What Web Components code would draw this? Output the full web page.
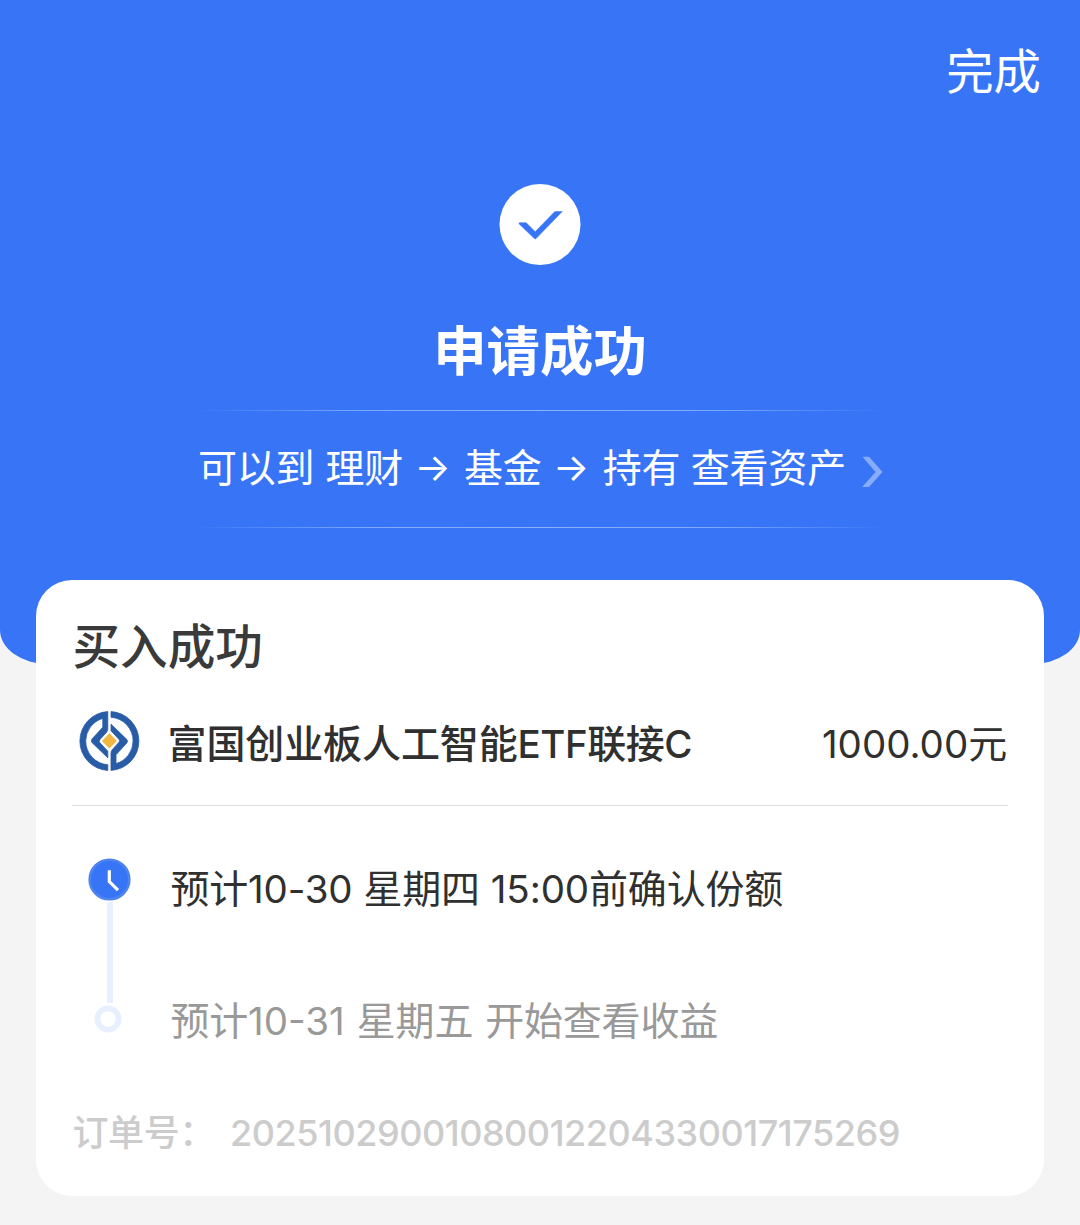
<!DOCTYPE html>
<html lang="zh-CN">
<head>
<meta charset="utf-8">
<title>申请成功</title>
<style>
    body {
        margin: 0;
        background: #f4f4f4;
        font-family: Inter, "Noto Sans CJK SC", sans-serif;
    }
</style>
</head>
<body>
<result-page>
    <result-header slot="header" action="完成" heading="申请成功">
        <text-run>可以到</text-run>
        <text-run style="--gap: 11px">理财</text-run>
        <text-run arrow style="--gap: 12px">→</text-run>
        <text-run style="--gap: 12px">基金</text-run>
        <text-run arrow style="--gap: 12px">→</text-run>
        <text-run style="--gap: 12px">持有</text-run>
        <text-run style="--gap: 10.5px">查看资产</text-run>
    </result-header>
    <order-card heading="买入成功">
        <fund-row slot="fund">
            <text-run style="--space: -0.1px">富国创业板人工智能</text-run><text-run latin style="--space: -0.5px">ETF</text-run><text-run style="--space: -0.5px">联接</text-run><text-run latin style="--space: -0.5px">C</text-run>
            <text-run slot="amount" latin style="--space: 0">1000.00</text-run><text-run slot="amount">元</text-run>
        </fund-row>
        <time-step active>
            <text-run>预计</text-run><text-run latin style="--space: -0.2px">10-30</text-run>
            <text-run style="--gap: 11px">星期四</text-run>
            <text-run latin style="--gap: 11px; --space: -0.1px">15:00</text-run><text-run>前确认份额</text-run>
        </time-step>
        <time-step>
            <text-run>预计</text-run><text-run latin style="--space: 0">10-31</text-run>
            <text-run style="--gap: 12px">星期五</text-run>
            <text-run style="--gap: 12px">开始查看收益</text-run>
        </time-step>
        <order-number slot="footer" label="订单号：">20251029001080012204330017175269</order-number>
    </order-card>
</result-page>

<script>
(function() {
    /**
     * Build a template from a string of markup, so that each
     * element clones it instead of parsing it again.
     */
    function createTemplate(html) {
        const template = document.createElement('template');
        template.innerHTML = html;
        return template;
    }

    class BaseElement extends HTMLElement {
        constructor() {
            super();
            this.attachShadow({mode: 'open'});
            this.shadowRoot.appendChild(this.constructor.template.content.cloneNode(true));
        }

        connectedCallback() {
            // copy plain text attributes into the nodes that show them
            this.shadowRoot.querySelectorAll('[data-text]').forEach((node) => {
                node.textContent = this.getAttribute(node.dataset.text) || '';
            });
        }
    }

    class ResultPage extends BaseElement {
        static template = createTemplate(`
        <style>
            :host {
                display: block;
                min-height: 1225px;
            }
            main {
                margin: -85px 36px 0;
            }
        </style>
        <slot name="header"></slot>
        <main><slot></slot></main>
        `);
    }

    class TextRun extends BaseElement {
        static template = createTemplate(`
        <style>
            :host {
                display: block;
                flex: none;
                white-space: nowrap;
                margin-left: var(--gap, 0);
                font-size: 39px;
                line-height: 56px;
                letter-spacing: var(--space, -0.2px);
            }
            :host([latin]) {
                font-size: 38.5px;
            }
            :host([arrow]) {
                display: flex;
                justify-content: center;
                box-sizing: border-box;
                width: 37px;
                padding-right: 2px;
                margin-top: -2px;
                font-size: 38px;
            }
        </style>
        <slot></slot>
        `);
    }

    class ResultHeader extends BaseElement {
        static template = createTemplate(`
        <style>
            :host {
                display: flex;
                flex-direction: column;
                align-items: center;
                box-sizing: border-box;
                height: 664px;
                background: #3875f6;
                color: #fff;
                border-radius: 0 0 48px 48px / 0 0 34px 34px;
                margin-bottom: 1px;
            }
            .action {
                align-self: flex-end;
                margin: 42px 39px 0 0;
                font-size: 47.4px;
                line-height: 60px;
            }
            svg {
                display: block;
                flex: none;
            }
            .badge {
                margin-top: 82px;
            }
            h1 {
                margin: 51px 0 0;
                font-size: 53.4px;
                line-height: 70px;
                font-weight: 700;
            }
            .hint {
                position: relative;
                display: flex;
                align-items: center;
                box-sizing: border-box;
                width: 684px;
                height: 118px;
                margin-top: 23px;
                padding-bottom: 3px;
            }
            .hint::before, .hint::after {
                content: "";
                position: absolute;
                left: 0;
                right: 0;
                height: 1px;
                background: linear-gradient(90deg, transparent, #7eaafa 25%, #8ab2fb 50%, #7eaafa 75%, transparent);
            }
            .hint::before { top: 0; }
            .hint::after { bottom: 0; }
            .chevron {
                margin: 9px 0 0 16px;
            }
        </style>
        <div class="action" data-text="action"></div>
        <svg class="badge" width="82" height="82" viewBox="0 0 82 82">
            <circle cx="41" cy="40.5" r="40.5" fill="#fff"/>
            <path d="M20.2 38.8H27.2L36.2 47.8 55.2 28.2Q55.8 27.6 56.8 27.6H63.2L37 54.6Q36.2 55.3 35.4 54.6L20 39.8Z" fill="#3875f6" stroke="#3875f6" stroke-width=".6"/>
        </svg>
        <h1 data-text="heading"></h1>
        <div class="hint">
            <slot></slot>
            <svg class="chevron" width="21" height="32" viewBox="0 0 21 32">
                <path d="M.5 .8H7L20.5 16 7 31H.2L13.5 16Z" fill="#86adfb"/>
            </svg>
        </div>
        `);
    }

    class OrderCard extends BaseElement {
        static template = createTemplate(`
        <style>
            :host {
                position: relative;
                display: flex;
                flex-direction: column;
                box-sizing: border-box;
                height: 616px;
                padding: 0 36px;
                border-radius: 36px;
                background: #fff;
                color: #303030;
            }
            h2 {
                margin: 37px 0 0 0.5px;
                font-size: 47.6px;
                line-height: 60px;
                font-weight: 500;
                color: #3a3a3a;
            }
            .steps {
                display: grid;
                grid-template-rows: 132px 132px;
                margin-top: 15px;
            }
        </style>
        <h2 data-text="heading"></h2>
        <slot name="fund"></slot>
        <div class="steps"><slot></slot></div>
        <slot name="footer"></slot>
        `);
    }

    class FundRow extends BaseElement {
        static template = createTemplate(`
        <style>
            :host {
                display: flex;
                align-items: center;
                box-sizing: border-box;
                height: 129px;
                border-bottom: 1px solid #dedede;
            }
            svg {
                flex: none;
                margin: 0 28px 1px 7px;
            }
            .name, .amount {
                display: flex;
                margin-top: 6px;
                align-items: baseline;
            }
            .name {
                flex: 1;
                margin-left: -0.5px;
                font-weight: 500;
            }
            .amount {
                margin-right: 1px;
            }
        </style>
        <svg width="61" height="60" viewBox="0 0 61 60">
            <defs>
                <path id="half" d="M28.8 .6A29.4 29.4 0 0 0 .9 30A29.4 29.4 0 0 0 28.8 59.4V53.7A23.7 23.7 0 0 1 6.7 30A23.7 23.7 0 0 1 23.8 7.4V16.2L13.2 27.8Q11.4 29.8 13.2 31.8L28.8 46.8V40.2L20.8 31.6Q19.6 30.2 20.8 28.8L27.6 21.2Q28.8 19.6 28.8 18Z"/>
            </defs>
            <g fill="#285ca6" stroke="#285ca6" stroke-width=".8">
                <use href="#half"/>
                <use href="#half" transform="rotate(180 30.4 30)"/>
            </g>
            <path d="M30.4 22.3L37.9 29.9 30.4 37.5 22.9 29.9Z" fill="#f0b843"/>
        </svg>
        <div class="name"><slot></slot></div>
        <div class="amount"><slot name="amount"></slot></div>
        `);
    }

    class TimeStep extends BaseElement {
        static template = createTemplate(`
        <style>
            :host {
                display: grid;
                grid-template-columns: 98.5px 1fr;
                color: #999;
            }
            :host([active]) {
                color: #303030;
            }
            .mark {
                display: flex;
                flex-direction: column;
                align-items: center;
                width: 75px;
            }
            svg {
                display: block;
                flex: none;
            }
            .clock, .line {
                display: none;
            }
            :host([active]) .clock, :host([active]) .line {
                display: block;
            }
            :host([active]) .ring {
                display: none;
            }
            .clock {
                margin-top: 37px;
            }
            .line {
                width: 6px;
                height: 101px;
                flex: none;
                margin-top: 1px;
                background: #e8f0ff;
            }
            .ring {
                margin: 52px 3px 0 0;
            }
            .text {
                display: flex;
                align-items: baseline;
                align-self: start;
                margin-top: 40px;
            }
        </style>
        <div class="mark">
            <svg class="clock" width="43" height="43" viewBox="0 0 43 43">
                <circle cx="21.5" cy="21.5" r="19.8" fill="#3875f6" stroke="#4d84f0" stroke-width="2.6"/>
                <path d="M21.3 12.3V23.7L30 32.2" fill="none" stroke="#fff" stroke-width="3.2"/>
            </svg>
            <div class="line"></div>
            <svg class="ring" width="28" height="28" viewBox="0 0 28 28">
                <circle cx="14" cy="14" r="10.6" fill="none" stroke="#e8f0ff" stroke-width="5.8"/>
            </svg>
        </div>
        <div class="text"><slot></slot></div>
        `);
    }

    class OrderNumber extends BaseElement {
        static template = createTemplate(`
        <style>
            :host {
                display: flex;
                align-items: baseline;
                margin: 20px 0 0 0.5px;
                color: #ccc;
                font-size: 36px;
                line-height: 56px;
                font-weight: 500;
                white-space: nowrap;
            }
            .label {
                width: 157.5px;
                letter-spacing: -0.4px;
            }
            .value {
                letter-spacing: -0.47px;
            }
        </style>
        <span class="label" data-text="label"></span>
        <span class="value"><slot></slot></span>
        `);
    }

    window.customElements.define('result-page', ResultPage);
    window.customElements.define('text-run', TextRun);
    window.customElements.define('result-header', ResultHeader);
    window.customElements.define('order-card', OrderCard);
    window.customElements.define('fund-row', FundRow);
    window.customElements.define('time-step', TimeStep);
    window.customElements.define('order-number', OrderNumber);
})();
</script>
</body>
</html>
